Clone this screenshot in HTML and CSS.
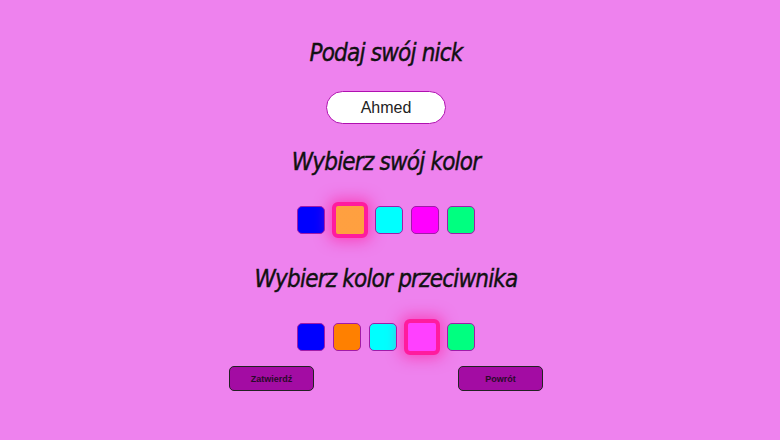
FILE: index.html
```html
<!DOCTYPE html>
<html lang="pl">
<head>
<meta charset="utf-8">
<title>Podaj swój nick</title>
<link rel="stylesheet" href="styles.css">
</head>
<body>
<main class="screen">
  <h2 class="title title-nick">Podaj swój nick</h2>
  <input class="nick" type="text" value="Ahmed">
  <h2 class="title title-color">Wybierz swój kolor</h2>
  <div class="swatches swatches-own">
    <span class="swatch" style="background-color:#0000ff"></span>
    <span class="swatch selected" style="background-color:#ff8000"></span>
    <span class="swatch" style="background-color:#00ffff"></span>
    <span class="swatch" style="background-color:#ff00ff"></span>
    <span class="swatch" style="background-color:#00ff80"></span>
  </div>
  <h2 class="title title-enemy">Wybierz kolor przeciwnika</h2>
  <div class="swatches swatches-enemy">
    <span class="swatch" style="background-color:#0000ff"></span>
    <span class="swatch" style="background-color:#ff8000"></span>
    <span class="swatch" style="background-color:#00ffff"></span>
    <span class="swatch selected" style="background-color:#ff00ff"></span>
    <span class="swatch" style="background-color:#00ff80"></span>
  </div>
  <div class="actions">
    <button class="btn" type="button">Zatwierdź</button>
    <button class="btn" type="button">Powrót</button>
  </div>
</main>
</body>
</html>
```

FILE: styles.css
```css
html, body {
  margin: 0;
  height: 100%;
}

body {
  background: #ee82ee;
  padding-right: 8px;
  box-sizing: border-box;
  font-family: "Liberation Sans", Arial, sans-serif;
  overflow: hidden;
}

.screen {
  display: flex;
  flex-direction: column;
  align-items: center;
}

.title {
  margin: 0;
  font-family: "DejaVu Sans Condensed", "DejaVu Sans", sans-serif;
  font-style: oblique;
  font-weight: normal;
  font-size: 24px;
  line-height: 28px;
  letter-spacing: -0.8px;
  color: #111;
  -webkit-text-stroke: 0.4px #111;
}

.title-nick { margin-top: 39px; }
.title-color { margin-top: 24px; }
.title-enemy { margin-top: 27px; }

.nick {
  margin-top: 24px;
  width: 120px;
  height: 33px;
  box-sizing: border-box;
  border: 1px solid #b010b0;
  border-radius: 17px;
  background: #fff;
  text-align: center;
  font-family: "Liberation Sans", Arial, sans-serif;
  font-size: 16px;
  color: #222;
  padding: 0;
  outline: none;
}

.swatches {
  display: flex;
  align-items: center;
  gap: 8px;
  height: 36px;
}

.swatches-own { margin-top: 26px; }
.swatches-enemy { margin-top: 26px; }

.swatch {
  display: block;
  width: 28px;
  height: 28px;
  box-sizing: border-box;
  border: 1px solid #a01ca8;
  border-radius: 5px;
}

.swatch.selected {
  width: 36px;
  height: 36px;
  margin: 0 -1px;
  border: 4px solid #ff1c9e;
  border-radius: 6px;
  background-image: linear-gradient(rgba(255,255,255,0.25), rgba(255,255,255,0.25));
  box-shadow: 0 0 14px 4px rgba(255, 20, 150, 0.5);
}

.actions {
  margin-top: 11px;
  display: flex;
  gap: 144px;
}

.btn {
  width: 85px;
  height: 25px;
  box-sizing: border-box;
  background: #a30ca3;
  border: 1px solid #222;
  border-radius: 5px;
  font-family: "Liberation Sans", Arial, sans-serif;
  font-weight: bold;
  font-size: 9px;
  color: #2a0a2a;
  padding: 0;
}
```
